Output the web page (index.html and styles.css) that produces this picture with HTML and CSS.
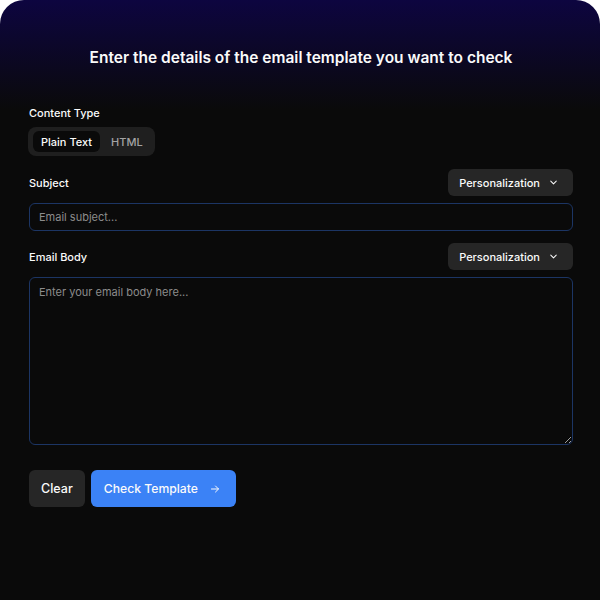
FILE: index.html
```html
<!DOCTYPE html>
<html lang="en">

<head>
    <meta charset="UTF-8">
    <meta name="viewport" content="width=device-width, initial-scale=1.0">
    <title>Email Template Checker</title>
    <link rel="stylesheet" href="styles.css">
</head>

<body>
    <div class="checker-card">
        <h1 class="checker-title">Enter the details of the email template you want to check</h1>

        <form class="checker-form">
            <div class="field">
                <label class="field-label">Content Type</label>
                <div class="type-toggle">
                    <button type="button" class="toggle-btn active">Plain Text</button>
                    <button type="button" class="toggle-btn">HTML</button>
                </div>
            </div>

            <div class="field">
                <div class="field-row">
                    <label class="field-label">Subject</label>
                    <button type="button" class="personalize-btn">
                        Personalization
                        <svg width="11" height="11" viewBox="0 0 24 24" fill="none" stroke="currentColor" stroke-width="2.2" stroke-linecap="round" stroke-linejoin="round"><path d="M6 9l6 6 6-6"/></svg>
                    </button>
                </div>
                <input type="text" class="text-input" placeholder="Email subject...">
            </div>

            <div class="field">
                <div class="field-row">
                    <label class="field-label">Email Body</label>
                    <button type="button" class="personalize-btn">
                        Personalization
                        <svg width="11" height="11" viewBox="0 0 24 24" fill="none" stroke="currentColor" stroke-width="2.2" stroke-linecap="round" stroke-linejoin="round"><path d="M6 9l6 6 6-6"/></svg>
                    </button>
                </div>
                <textarea class="text-input body-input" placeholder="Enter your email body here..."></textarea>
            </div>

            <div class="form-actions">
                <button type="button" class="clear-btn">Clear</button>
                <button type="button" class="check-btn">
                    Check Template
                    <svg width="12" height="12" viewBox="0 0 24 24" fill="none" stroke="currentColor" stroke-width="2" stroke-linecap="round" stroke-linejoin="round"><path d="M5 12h14M13 6l6 6-6 6"/></svg>
                </button>
            </div>
        </form>
    </div>
</body>

</html>
```

FILE: styles.css
```css
* {
    margin: 0;
    padding: 0;
    box-sizing: border-box;
    font-family: Inter, "Noto Sans", sans-serif;
}

body {
    background-color: #ffffff;
    height: 600px;
    overflow: hidden;
}

.checker-card {
    height: 600px;
    border-radius: 24px 24px 0 0;
    background: linear-gradient(180deg, #0d0540 0%, #0a0a0a 110px, #0a0a0a 100%);
    padding: 46px 27px 0 29px;
    color: #fafafa;
}

.checker-title {
    text-align: center;
    font-size: 15.5px;
    font-weight: 600;
    line-height: 24px;
    margin-bottom: 35px;
}

.checker-form {
    display: flex;
    flex-direction: column;
}

.field {
    display: flex;
    flex-direction: column;
    gap: 7px;
    margin-bottom: 12px;
}

.field:first-child {
    gap: 6px;
    margin-bottom: 13px;
}

.field-label {
    font-size: 11px;
    font-weight: 500;
    line-height: 16px;
}

.field-row {
    display: flex;
    align-items: center;
    justify-content: space-between;
}

.type-toggle {
    display: flex;
    align-self: flex-start;
    align-items: center;
    gap: 3px;
    height: 29px;
    margin-left: -1px;
    padding: 4px 4px 4px 5px;
    background-color: #1f1f1f;
    border-radius: 8px;
}

.toggle-btn {
    height: 21px;
    padding: 0 8px;
    border: none;
    border-radius: 6px;
    background: none;
    color: #a3a3a3;
    font-size: 11px;
    font-weight: 500;
    cursor: pointer;
}

.toggle-btn.active {
    background-color: #0a0a0a;
    color: #fafafa;
}

.personalize-btn {
    display: flex;
    align-items: center;
    gap: 8px;
    height: 27px;
    padding: 0 14px 0 11px;
    border: none;
    border-radius: 6px;
    background-color: #262626;
    color: #fafafa;
    font-size: 11px;
    font-weight: 500;
    cursor: pointer;
}

.text-input {
    width: 100%;
    height: 28px;
    padding: 0 9px;
    border: 1px solid #1c3564;
    border-radius: 6px;
    background-color: #0a0a0a;
    color: #fafafa;
    font-size: 11px;
    outline: none;
}

.text-input::placeholder {
    color: #8c8c8c;
}

.body-input {
    height: 168px;
    padding: 7px 9px;
    line-height: 15px;
    resize: vertical;
}

.form-actions {
    display: flex;
    gap: 6px;
    margin-top: 13px;
}

.clear-btn,
.check-btn {
    display: flex;
    align-items: center;
    height: 37px;
    border: none;
    border-radius: 6px;
    color: #fafafa;
    font-size: 12.5px;
    font-weight: 500;
    cursor: pointer;
}

.clear-btn {
    padding: 0 12px;
    background-color: #262626;
}

.check-btn {
    gap: 11px;
    padding: 0 15px 0 13px;
    font-size: 12.2px;
    background-color: #3b82f6;
}
```
